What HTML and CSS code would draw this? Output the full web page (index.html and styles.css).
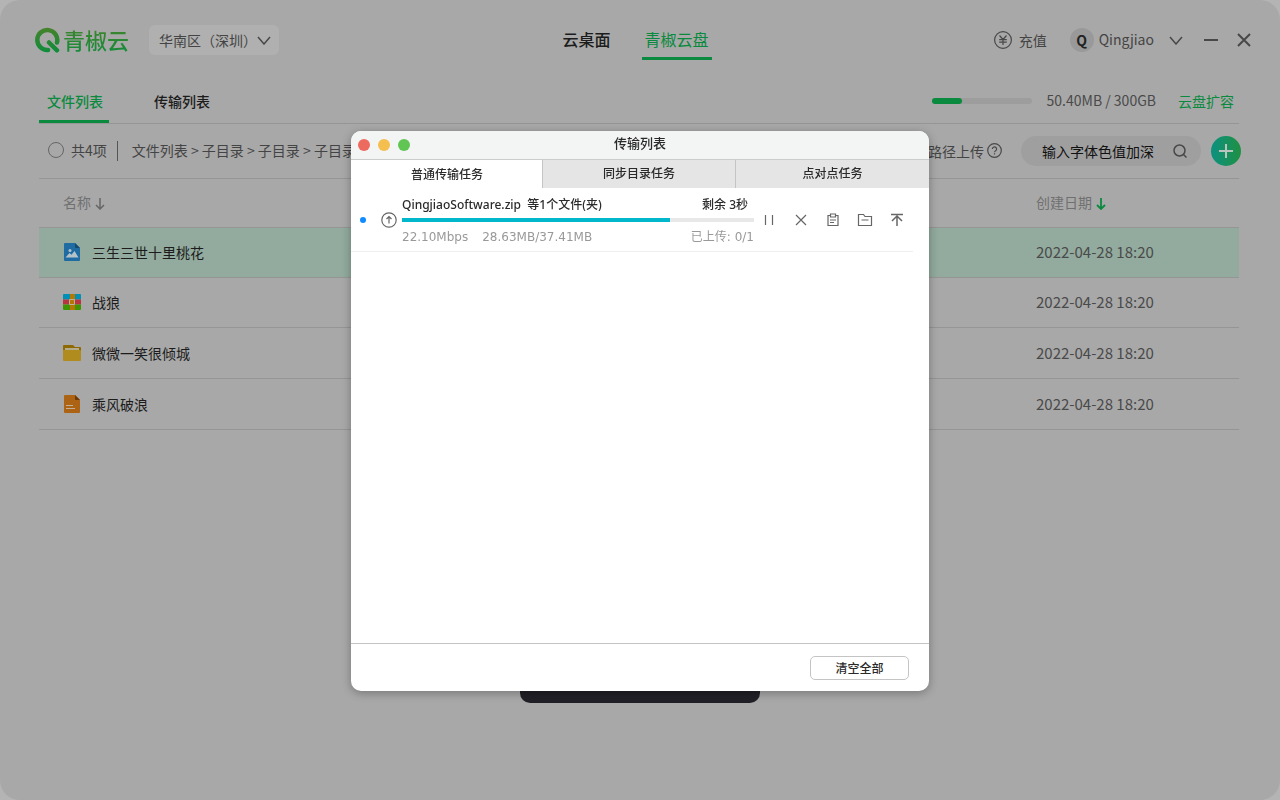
FILE: index.html
```html
<!DOCTYPE html>
<html lang="zh-CN">
<head>
<meta charset="utf-8">
<meta name="viewport" content="width=device-width, initial-scale=1">
<title>青椒云盘</title>
<link rel="stylesheet" href="styles.css">
</head>
<body>
<div class="app">
  <header class="topbar">
    <div class="topbar-left">
      <a class="logo" href="#">
        <svg width="25" height="26" viewBox="0 0 25 26" fill="none" aria-hidden="true">
          <defs><linearGradient id="brand" x1="0" y1="0" x2="0" y2="26" gradientUnits="userSpaceOnUse"><stop offset="0" stop-color="#48822a"/><stop offset="1" stop-color="#0c8d3c"/></linearGradient></defs>
          <path d="M13 23A10 10 0 1 1 22 15.500" stroke="url(#brand)" stroke-width="4.500" stroke-linecap="round"/>
          <path d="M14 15.500L22 23.300" stroke="url(#brand)" stroke-width="4.500" stroke-linecap="round"/>
        </svg>
        <span class="logo-text">青椒云</span>
      </a>
      <div class="region">
        <select class="region-select" aria-label="区域"><option>华南区（深圳）</option></select>
        <svg class="region-arrow" width="14" height="9" viewBox="0 0 14 9" aria-hidden="true"><path class="line" d="M1 1l6 7 6-7"/></svg>
      </div>
    </div>
    <nav class="main-nav">
      <a class="nav-link" href="#">云桌面</a>
      <a class="nav-link nav-current" href="#">青椒云盘</a>
    </nav>
    <div class="topbar-right">
      <button class="plain recharge">
        <svg width="18" height="18" viewBox="0 0 18 18" aria-hidden="true"><circle class="thin" cx="9" cy="9" r="8.400"/><path class="thin" d="M5.500 4.500L9 8.500l3.500-4M9 8.500V14M5.200 8.700h7.600M5.200 11.200h7.600"/></svg>
        <span>充值</span>
      </button>
      <button class="plain user">
        <span class="avatar">Q</span>
        <span class="user-name">Qingjiao</span>
        <svg width="14" height="9" viewBox="0 0 14 9" aria-hidden="true"><path class="line" d="M1 1l6 7 6-7"/></svg>
      </button>
      <div class="window-buttons">
        <button class="plain" aria-label="最小化"><svg width="14" height="14" viewBox="0 0 14 14"><path class="bold" d="M0 7h14"/></svg></button>
        <button class="plain" aria-label="关闭"><svg width="14" height="14" viewBox="0 0 14 14"><path class="bold" d="M1 1l12 12M13 1L1 13"/></svg></button>
      </div>
    </div>
  </header>

  <main class="content">
    <div class="subbar">
      <nav class="subtabs">
        <a class="subtab subtab-current" href="#">文件列表</a>
        <a class="subtab" href="#">传输列表</a>
      </nav>
      <div class="storage">
        <div class="meter"><div class="meter-fill" style="width:30%"></div></div>
        <span class="storage-text">50.40MB / 300GB</span>
        <a class="expand" href="#">云盘扩容</a>
      </div>
    </div>

    <div class="toolbar">
      <label class="select-all"><input class="round-check" type="checkbox">共4项</label>
      <div class="crumbs">文件列表 &gt; 子目录 &gt; 子目录 &gt; 子目录</div>
      <div class="tools">
        <button class="plain upload-path">路径上传
          <svg width="15" height="15" viewBox="0 0 15 15" aria-hidden="true"><circle class="thin" cx="7.500" cy="7.500" r="6.800"/><path class="thin" d="M5.400 6a2.100 2.100 0 1 1 3.300 1.700c-.8.600-1.200.8-1.200 1.600M7.500 10.300v1.200"/></svg>
        </button>
        <div class="search">
          <input class="search-input" type="text" placeholder="输入字体色值加深" aria-label="搜索">
          <svg width="15" height="15" viewBox="0 0 15 15" aria-hidden="true"><circle class="line" cx="6.500" cy="6.500" r="5.500"/><path class="line" d="M10.500 10.500L13.500 13.500"/></svg>
        </div>
        <button class="add" aria-label="新建"><svg width="14" height="14" viewBox="0 0 14 14"><path d="M7 0v14M0 7h14" stroke="#b9c4be" stroke-width="2"/></svg></button>
      </div>
    </div>

    <table class="files">
      <thead>
        <tr>
          <th class="name-col">名称 <svg width="10" height="12" viewBox="0 0 10 12" aria-hidden="true"><path d="M5 0v11M1 7l4 4 4-4" fill="none" stroke="#666" stroke-width="1.500"/></svg></th>
          <th class="date-col">创建日期 <svg width="10" height="12" viewBox="0 0 10 12" aria-hidden="true"><path d="M5 0v11M1 7l4 4 4-4" fill="none" stroke="#0a8a3e" stroke-width="1.800"/></svg></th>
        </tr>
      </thead>
      <tbody>
        <tr class="selected">
          <td class="name-col"><span class="file">
            <svg width="18" height="18" viewBox="0 0 18 18" aria-hidden="true"><path d="M2 0h10l5 5v12a1 1 0 0 1-1 1H2a1 1 0 0 1-1-1V1a1 1 0 0 1 1-1z" fill="#1f6ca3"/><path d="M12 0l5 5h-4a1 1 0 0 1-1-1z" fill="#134a70"/><circle cx="7" cy="7.500" r="1.500" fill="#b5c2ca"/><path d="M2.500 14.500L6.500 10l2 1.800L11.500 8l4 6.500z" fill="#b5c2ca"/></svg>
            三生三世十里桃花</span></td>
          <td class="date-col">2022-04-28 18:20</td>
        </tr>
        <tr>
          <td class="name-col"><span class="file">
            <svg width="18" height="16" viewBox="0 0 18 16" aria-hidden="true"><path d="M0 5.500V1a1 1 0 0 1 1-1h16a1 1 0 0 1 1 1v4.500z" fill="#008fb5"/><path d="M0 5.500h18v5H0z" fill="#b8353f"/><path d="M0 10.500h18V15a1 1 0 0 1-1 1H1a1 1 0 0 1-1-1z" fill="#3f9400"/><path d="M7 0h5v16H7z" fill="#b37800"/><path d="M6.500 5.500h5v5h-5z" fill="#b37800" stroke="#b9b39d"/></svg>
            战狼</span></td>
          <td class="date-col">2022-04-28 18:20</td>
        </tr>
        <tr class="tall">
          <td class="name-col"><span class="file">
            <svg width="18" height="16" viewBox="0 0 18 16" aria-hidden="true"><path d="M0 1a1 1 0 0 1 1-1h9l2 2h5a1 1 0 0 1 1 1v5H0z" fill="#8f6a00"/><path d="M2 3h14v3H2z" fill="#b3ab8c"/><path d="M0 5h17a1 1 0 0 1 1 1v9a1 1 0 0 1-1 1H1a1 1 0 0 1-1-1z" fill="#b08c1e"/></svg>
            微微一笑很倾城</span></td>
          <td class="date-col">2022-04-28 18:20</td>
        </tr>
        <tr class="tall">
          <td class="name-col"><span class="file">
            <svg width="18" height="18" viewBox="0 0 18 18" aria-hidden="true"><path d="M2 0h10l5 5v12a1 1 0 0 1-1 1H2a1 1 0 0 1-1-1V1a1 1 0 0 1 1-1z" fill="#ad6314"/><path d="M12 0l5 5h-4a1 1 0 0 1-1-1z" fill="#6e3a04"/><path d="M3 10.500h7M3 13.500h9" stroke="#c4b09a" stroke-width="1.200"/></svg>
            乘风破浪</span></td>
          <td class="date-col">2022-04-28 18:20</td>
        </tr>
      </tbody>
    </table>
  </main>
  <div class="toast"></div>
</div>

<div class="layer">
  <section class="dialog" role="dialog" aria-labelledby="dialog-title">
    <header class="dialog-head">
      <div class="lights">
        <button class="light light-red" aria-label="关闭"></button>
        <button class="light light-yellow" aria-label="最小化"></button>
        <button class="light light-green" aria-label="缩放"></button>
      </div>
      <h1 class="dialog-title" id="dialog-title">传输列表</h1>
    </header>
    <div class="tabs" role="tablist">
      <button class="tab tab-current" role="tab" aria-selected="true">普通传输任务</button>
      <button class="tab" role="tab" aria-selected="false">同步目录任务</button>
      <button class="tab" role="tab" aria-selected="false">点对点任务</button>
    </div>
    <div class="tasks">
      <article class="task">
        <span class="dot"></span>
        <svg width="16" height="16" viewBox="0 0 16 16" fill="none" stroke="#666" stroke-width="1.200" aria-hidden="true"><circle cx="8" cy="8" r="7.200"/><path d="M8 11.500V5M5.500 7L8 4.500 10.500 7"/></svg>
        <div class="task-body">
          <div class="task-line task-name"><span>QingjiaoSoftware.zip&nbsp; 等1个文件(夹)</span><span class="remain">剩余 3秒</span></div>
          <div class="bar"><div class="bar-fill" style="width:76%"></div></div>
          <div class="task-line task-meta"><span class="speed">22.10Mbps</span><span>28.63MB/37.41MB</span><span class="done">已上传: 0/1</span></div>
        </div>
        <div class="actions">
          <button class="plain" aria-label="暂停"><svg class="act" viewBox="0 0 16 16"><path d="M4.500 3v10M11.500 3v10"/></svg></button>
          <button class="plain" aria-label="取消"><svg class="act" viewBox="0 0 16 16"><path d="M3 3l10 10M13 3L3 13"/></svg></button>
          <button class="plain" aria-label="复制"><svg class="act" viewBox="0 0 16 16"><path d="M5 3.500H3v10h10v-10h-2M5.500 2h5v3h-5zM5 8h6M5 10.500h4"/></svg></button>
          <button class="plain" aria-label="打开目录"><svg class="act" viewBox="0 0 16 16"><path d="M1.500 13.500v-11h5l1.500 2h6.500v9zM4.500 8h7"/></svg></button>
          <button class="plain" aria-label="置顶"><svg class="act act-top" viewBox="0 0 16 16"><path d="M2 2.500h12M8 14V4M3 9l5-5 5 5"/></svg></button>
        </div>
      </article>
    </div>
    <footer class="dialog-foot"><button class="clear">清空全部</button></footer>
  </section>
</div>
</body>
</html>
```
FILE: styles.css
```css
* { box-sizing: border-box; }

body {
  margin: 0;
  background: #b4b4b4;
  color: #1c1c1c;
  font: 14px/20px "Noto Sans CJK SC", sans-serif;
}

a { color: inherit; text-decoration: none; }
button, input, select { font: inherit; color: inherit; }
svg { display: block; flex: none; }

.app {
  position: relative;
  min-height: 100vh;
  border-radius: 20px;
  background: #a8a8a8;
}

.plain {
  display: flex;
  align-items: center;
  padding: 0;
  border: 0;
  background: none;
}

.line, .thin, .bold { fill: none; stroke: #484848; }
.line { stroke-width: 1.5; }
.thin { stroke-width: 1.2; }
.bold { stroke-width: 2; }

/* Top bar */
.topbar {
  display: grid;
  grid-template-columns: 1fr auto 1fr;
  align-items: center;
  height: 80px;
  padding: 0 29px 0 35px;
}

.topbar-left, .topbar-right, .logo { display: flex; align-items: center; }
.topbar-left { gap: 20px; }
.topbar-right { justify-content: flex-end; color: #444; }
.logo { gap: 3px; }

.logo-text {
  padding-bottom: 2px;
  background: linear-gradient(#48822a, #0c8d3c);
  background-clip: text;
  color: transparent;
  font-size: 22px;
  font-weight: 500;
  line-height: 32px;
}

.region { position: relative; }

.region-select {
  width: 130px;
  height: 30px;
  padding: 0 10px;
  border: 0;
  border-radius: 6px;
  background: #b0b0b0;
  color: #444;
  appearance: none;
}

.region-arrow {
  position: absolute;
  top: 11px;
  right: 8px;
  pointer-events: none;
}

.main-nav {
  display: flex;
  gap: 28px;
  padding-right: 12px;
  font-size: 16px;
}

.nav-link { padding: 9px 3px 8px; border-bottom: 3px solid transparent; font-weight: 500; }
.nav-link:first-child { padding-left: 0; }
.nav-current { border-color: #0a8a3e; color: #0a8a3e; font-weight: 400; }

.recharge { gap: 7px; margin-right: 23px; padding-bottom: 1px; }
.user { gap: 5px; margin-right: 21px; }
.user-name { margin-right: 10px; padding-bottom: 2px; }

.avatar {
  width: 24px;
  border-radius: 50%;
  background: #999;
  color: #222;
  font-weight: 700;
  line-height: 24px;
}

.window-buttons { display: flex; gap: 19px; }

/* File area */
.content { padding: 0 41px 0 39px; }

.subbar {
  display: flex;
  justify-content: space-between;
  align-items: center;
  height: 44px;
  border-bottom: 1px solid #959595;
}

.subtabs { display: flex; gap: 37px; }
.subtab { padding: 11px 6px 9px 8px; border-bottom: 3px solid transparent; font-weight: 500; }
.subtab-current { border-color: #0a8a3e; color: #0a8a3e; }

.storage { display: flex; align-items: center; padding: 0 5px 2px 0; color: #4a4a4a; }
.storage-text { margin: 0 22px 0 15px; padding-bottom: 2px; }
.meter { width: 100px; height: 6px; border-radius: 3px; background: #9d9d9d; }
.meter-fill { height: 6px; border-radius: 3px; background: #0a8a3e; }
.expand { color: #0a8a3e; }

.toolbar {
  display: flex;
  align-items: center;
  height: 55px;
  border-bottom: 1px solid #959595;
  color: #444;
  line-height: 18px;
}

.select-all {
  display: flex;
  align-items: center;
  gap: 7px;
  padding: 0 10px 2px 9px;
  border-right: 1px solid #555;
}

.round-check {
  width: 16px;
  height: 16px;
  margin: 0;
  border: 1px solid #666;
  border-radius: 50%;
  appearance: none;
}

.crumbs { flex: 1; padding: 0 0 2px 14px; }
.tools { display: flex; align-items: center; margin-right: -2px; }
.upload-path { gap: 3px; margin-right: 19px; padding-bottom: 1px; }

.search {
  display: flex;
  align-items: center;
  width: 180px;
  height: 30px;
  margin-right: 10px;
  padding: 0 13px 0 21px;
  border-radius: 15px;
  background: #9f9f9f;
}

.search-input {
  flex: 1;
  min-width: 0;
  padding: 0;
  border: 0;
  background: none;
}

.search-input::placeholder { color: #111; opacity: 1; }

.add {
  display: grid;
  place-items: center;
  width: 30px;
  height: 30px;
  padding: 0;
  border: 0;
  border-radius: 50%;
  background: linear-gradient(90deg, #0c9180, #1f9042);
}

.files { width: 100%; border-collapse: collapse; table-layout: fixed; }
.files th { height: 48px; padding: 0 0 2px; color: #707070; font-weight: 400; text-align: left; }
.files th svg { display: inline-block; margin-left: 1px; vertical-align: -2px; }
.files tr { border-bottom: 1px solid #959595; }
.files td { height: 50px; padding: 0; }
.files .tall td { height: 51px; }
.files .name-col { padding-left: 24px; }
.files .date-col { width: 203px; }
.files td.date-col { color: #4a4a4a; font-size: 15px; }
.file { display: flex; align-items: center; gap: 11px; }
.selected { background: #92ab9e; }

.toast {
  position: absolute;
  top: 663px;
  left: 50%;
  width: 240px;
  height: 40px;
  margin-left: -120px;
  border-radius: 10px;
  background: #212026;
}

/* Transfer dialog */
.layer {
  position: fixed;
  inset: 0;
  display: grid;
  place-items: center;
  padding-top: 22px;
}

.dialog {
  display: flex;
  flex-direction: column;
  width: min(578px, 92vw);
  height: min(560px, 92vh);
  overflow: hidden;
  border-radius: 10px;
  background: #fff;
  box-shadow: 0 2px 10px rgba(0, 0, 0, .3);
  color: #2a2a2a;
  font-family: "Noto Sans", "Noto Sans CJK SC", sans-serif;
  font-size: 12px;
}

.dialog-head {
  display: grid;
  grid-template-columns: 1fr auto 1fr;
  align-items: center;
  height: 29px;
  padding: 0 7px;
  border-bottom: 1px solid #ccc;
  background: #f3f5f4;
}

.dialog-title { margin: 0; padding-bottom: 4px; font-size: 13px; font-weight: 500; }
.lights { display: flex; gap: 8px; }
.light { width: 12px; height: 12px; padding: 0; border: 0; border-radius: 50%; }
.light-red { background: #ed6a5e; }
.light-yellow { background: #f5bf4f; }
.light-green { background: #61c554; }

.tabs { display: grid; grid-template-columns: 191fr 193fr 194fr; height: 28px; }

.tab {
  padding: 0;
  border: 0;
  border-left: 1px solid #c4c4c4;
  background: #e5e5e5;
  font-weight: 500;
}

.tab-current { padding-top: 2px; border-color: #fff; background: #fff; }

.tasks { flex: 1; padding-right: 16px; }

.task {
  display: flex;
  align-items: center;
  height: 64px;
  padding-left: 9px;
  border-bottom: 1px solid #eee;
}

.dot { width: 6px; height: 6px; margin-right: 15px; border-radius: 50%; background: #108cff; }
.task-body { flex: 1; margin: 2px 7px 0 5px; }
.task-line { display: flex; line-height: 20px; }
.task-name { padding-bottom: 3px; font-weight: 500; }
.task-meta { padding-top: 5px; color: #999; font-family: "DejaVu Sans", "Noto Sans CJK SC", sans-serif; }
.remain { margin-left: auto; padding-right: 6px; }
.speed { margin-right: 14px; }
.done { margin-left: auto; }
.bar { height: 4px; background: #e8e8e8; }
.bar-fill { height: 4px; background: #00b7cc; }

.actions { display: flex; gap: 16px; padding-right: 8px; }
.act { width: 16px; height: 16px; fill: none; stroke: #666; stroke-width: 1.2; }
.act-top { stroke-width: 1.5; }

.dialog-foot {
  display: flex;
  justify-content: flex-end;
  padding: 12px 20px 11px;
  border-top: 1px solid #c4c4c4;
}

.clear {
  width: 99px;
  height: 24px;
  padding: 1px 0 0;
  border: 1px solid #c4c4c4;
  border-radius: 5px;
  background: #fff;
  font-weight: 500;
}
```
